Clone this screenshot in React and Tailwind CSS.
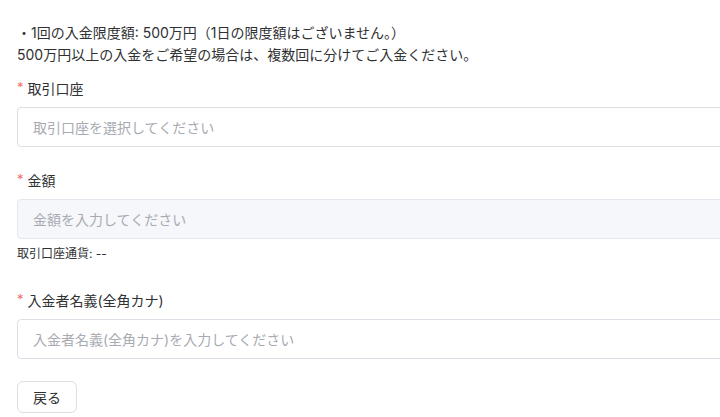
import React from "react";

function Label({ children, className }) {
    return (
        <div className={"flex items-center h-[22px] text-[14px] text-[#303133] " + className}>
            <span className="text-[#f56c6c] mr-[4px] text-[13px]">*</span>
            {children}
        </div>
    );
}

function Field({ placeholder, disabled, className }) {
    return (
        <div
            className={
                "h-[40px] w-[760px] rounded-[4px] border border-[#dcdfe6] flex items-center px-[15px] text-[14px] text-[#a8abb2] " +
                (disabled ? "bg-[#f5f7fa] border-[#e4e7ed] " : "bg-white ") +
                className
            }
        >
            {placeholder}
        </div>
    );
}

export default function App() {
    return (
        <div
            className="w-[720px] h-[417px] overflow-hidden bg-white pl-[17px] pt-[22px]"
            style={{ fontFamily: 'Inter, "Noto Sans CJK JP", sans-serif' }}
        >
            <div className="text-[14px] leading-[22px] text-[#303133]">
                <p>・1回の入金限度額: 500万円（1日の限度額はございません。）</p>
                <p>500万円以上の入金をご希望の場合は、複数回に分けてご入金ください。</p>
            </div>

            <Label className="mt-[11px]">取引口座</Label>
            <Field className="mt-[8px]" placeholder="取引口座を選択してください" />

            <Label className="mt-[22px]">金額</Label>
            <Field className="mt-[8px]" placeholder="金額を入力してください" disabled />
            <div className="mt-[5px] h-[20px] leading-[20px] text-[12px] text-[#303133]">
                取引口座通貨: --
            </div>

            <Label className="mt-[25px]">入金者名義(全角カナ)</Label>
            <Field className="mt-[8px]" placeholder="入金者名義(全角カナ)を入力してください" />

            <button className="mt-[22px] h-[32px] w-[60px] rounded-[6px] border border-[#dcdfe6] bg-white text-[14px] text-[#303133] flex items-center justify-center">
                戻る
            </button>
        </div>
    );
}
